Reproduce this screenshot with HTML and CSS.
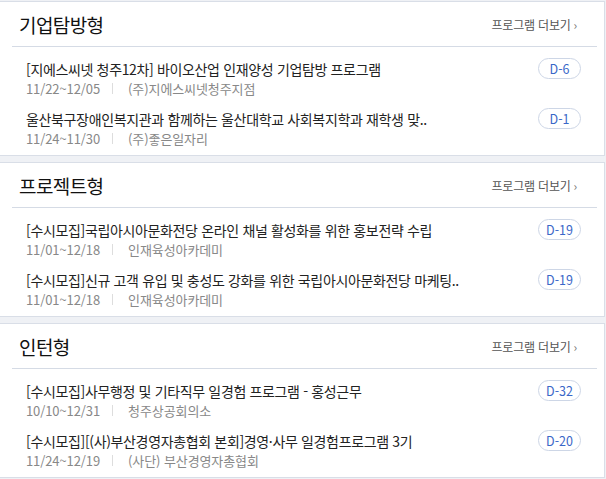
FILE: index.html
```html
<!DOCTYPE html>
<html lang="ko">
<head>
<meta charset="utf-8">
<link rel="stylesheet" href="styles.css">
</head>
<body>
<div class="list">
  <section class="card">
    <div class="card-head">
      <h2 class="card-title">기업탐방형</h2>
      <a class="more" href="#">프로그램 더보기<span class="chev">›</span></a>
    </div>
    <ul class="items">
      <li class="item">
        <div class="info">
          <p class="title">[지에스씨넷 청주12차] 바이오산업 인재양성 기업탐방 프로그램</p>
          <p class="meta"><span class="date">11/22~12/05</span><span class="bar"></span><span class="org">(주)지에스씨넷청주지점</span></p>
        </div>
        <span class="dday">D-6</span>
      </li>
      <li class="item">
        <div class="info">
          <p class="title">울산북구장애인복지관과 함께하는 울산대학교 사회복지학과 재학생 맞..</p>
          <p class="meta"><span class="date">11/24~11/30</span><span class="bar"></span><span class="org">(주)좋은일자리</span></p>
        </div>
        <span class="dday">D-1</span>
      </li>
    </ul>
  </section>
  <section class="card">
    <div class="card-head">
      <h2 class="card-title">프로젝트형</h2>
      <a class="more" href="#">프로그램 더보기<span class="chev">›</span></a>
    </div>
    <ul class="items">
      <li class="item">
        <div class="info">
          <p class="title">[수시모집]국립아시아문화전당 온라인 채널 활성화를 위한 홍보전략 수립</p>
          <p class="meta"><span class="date">11/01~12/18</span><span class="bar"></span><span class="org">인재육성아카데미</span></p>
        </div>
        <span class="dday">D-19</span>
      </li>
      <li class="item">
        <div class="info">
          <p class="title">[수시모집]신규 고객 유입 및 충성도 강화를 위한 국립아시아문화전당 마케팅..</p>
          <p class="meta"><span class="date">11/01~12/18</span><span class="bar"></span><span class="org">인재육성아카데미</span></p>
        </div>
        <span class="dday">D-19</span>
      </li>
    </ul>
  </section>
  <section class="card">
    <div class="card-head">
      <h2 class="card-title">인턴형</h2>
      <a class="more" href="#">프로그램 더보기<span class="chev">›</span></a>
    </div>
    <ul class="items">
      <li class="item">
        <div class="info">
          <p class="title">[수시모집]사무행정 및 기타직무 일경험 프로그램 - 홍성근무</p>
          <p class="meta"><span class="date">10/10~12/31</span><span class="bar"></span><span class="org">청주상공회의소</span></p>
        </div>
        <span class="dday">D-32</span>
      </li>
      <li class="item">
        <div class="info">
          <p class="title">[수시모집][(사)부산경영자총협회 본회]경영·사무 일경험프로그램 3기</p>
          <p class="meta"><span class="date">11/24~12/19</span><span class="bar"></span><span class="org">(사단) 부산경영자총협회</span></p>
        </div>
        <span class="dday">D-20</span>
      </li>
    </ul>
  </section>
</div>
</body>
</html>
```

FILE: styles.css
```css
* { box-sizing: border-box; }
html, body { margin: 0; padding: 0; }
body {
  background: #eff1f5;
  font-family: "Noto Sans CJK KR", "Noto Sans", sans-serif;
  color: #222;
  width: 606px;
  height: 479px;
  overflow: hidden;
}
.list {
  margin-left: -1px;
  width: 606px;
  padding-top: 1px;
  display: flex;
  flex-direction: column;
  gap: 6px;
}
.card {
  background: #fff;
  border: 1px solid #d9dee7;
}
.card-head {
  height: 45px;
  margin: 0 7px 0 12px;
  border-bottom: 1px solid #d5dbe5;
  display: flex;
  align-items: center;
  justify-content: space-between;
  padding: 1px 20px 0 7px;
}
.card-title {
  margin: 0;
  font-size: 19px;
  font-weight: 400;
  letter-spacing: -0.6px;
  color: #111;
  line-height: 24px;
}
.more {
  font-size: 12px;
  color: #555;
  text-decoration: none;
  letter-spacing: -0.2px;
  display: flex;
  align-items: center;
  gap: 3px;
}
.chev { font-size: 12px; color: #777; }
.items {
  list-style: none;
  margin: 0;
  padding: 12px 23px 7px 26px;
  display: flex;
  flex-direction: column;
  gap: 11px;
}
.item {
  display: flex;
  justify-content: space-between;
  align-items: flex-start;
}
.info p { margin: 0; }
.title {
  font-size: 14px;
  line-height: 20px;
  color: #222;
  letter-spacing: -0.35px;
}
.meta {
  font-size: 13px;
  line-height: 19px;
  color: #888;
  display: flex;
  align-items: center;
  letter-spacing: -0.1px;
}
.bar {
  width: 1px;
  height: 11px;
  background: #ddd;
  margin: 0 15px 0 12px;
}
.dday {
  flex: none;
  width: 43px;
  height: 21px;
  border: 1px solid #cdd6e6;
  border-radius: 11px;
  color: #3a67c8;
  font-size: 12.5px;
  display: flex;
  align-items: center;
  justify-content: center;
  margin-top: -1px;
}
```
